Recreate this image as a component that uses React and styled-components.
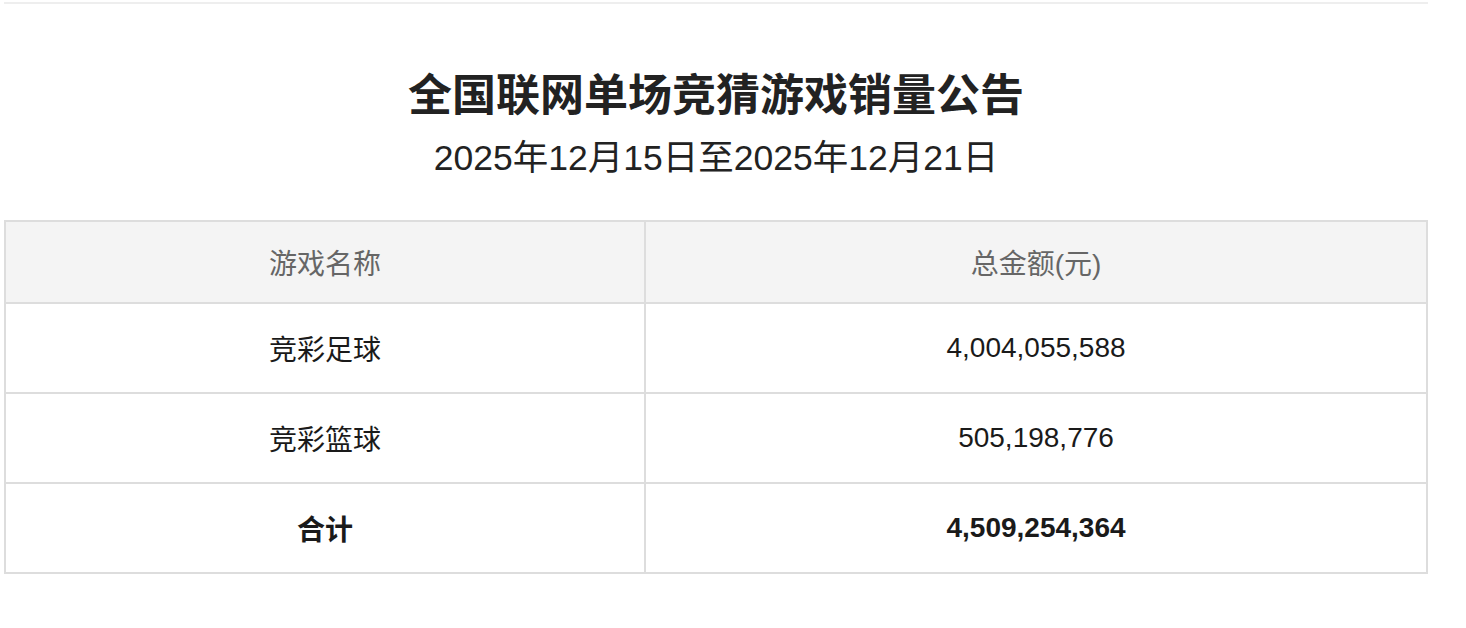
import React from "react";
import styled, { createGlobalStyle } from "styled-components";

const GlobalStyle = createGlobalStyle`
  html, body {
    margin: 0;
    padding: 0;
    background: #fff;
  }
  body {
    font-family: "Liberation Sans", "Noto Sans CJK SC", sans-serif;
    color: #1a1a1a;
  }
`;

const Page = styled.div`
  width: 1424px;
  margin-left: 4px;
  padding-top: 2px;
`;

const TopRule = styled.div`
  height: 2px;
  background: #eeeeee;
`;

const Heading = styled.div`
  display: flex;
  flex-direction: column;
  align-items: center;
  padding-top: 64px;
  padding-bottom: 34px;
`;

const Title = styled.h1`
  margin: 0;
  font-size: 44px;
  line-height: 56px;
  font-weight: 700;
  color: #222;
`;

const Subtitle = styled.p`
  margin: 6px 0 0;
  font-size: 35.5px;
  line-height: 56px;
  color: #222;
`;

const Table = styled.table`
  width: 100%;
  border-collapse: collapse;
  border: 2px solid #dddddd;
  table-layout: fixed;
`;

const HeadCell = styled.th`
  height: 80px;
  padding: 0;
  background: #f4f4f4;
  border: 2px solid #dddddd;
  font-size: 28px;
  font-weight: 400;
  color: #666;
  text-align: center;
  width: ${(p) => p.$width || "auto"};
`;

const Cell = styled.td`
  height: 88px;
  padding: 0;
  border: 2px solid #dddddd;
  font-size: 28px;
  font-weight: ${(p) => (p.$bold ? 700 : 400)};
  color: #1a1a1a;
  text-align: center;
`;

const rows = [
  { name: "竞彩足球", amount: "4,004,055,588" },
  { name: "竞彩篮球", amount: "505,198,776" },
  { name: "合计", amount: "4,509,254,364", total: true },
];

export default function App() {
  return (
    <>
      <GlobalStyle />
      <Page>
        <TopRule />
        <Heading>
          <Title>全国联网单场竞猜游戏销量公告</Title>
          <Subtitle>2025年12月15日至2025年12月21日</Subtitle>
        </Heading>
        <Table>
          <thead>
            <tr>
              <HeadCell $width="638px">游戏名称</HeadCell>
              <HeadCell>总金额(元)</HeadCell>
            </tr>
          </thead>
          <tbody>
            {rows.map((r) => (
              <tr key={r.name}>
                <Cell $bold={r.total}>{r.name}</Cell>
                <Cell $bold={r.total}>{r.amount}</Cell>
              </tr>
            ))}
          </tbody>
        </Table>
      </Page>
    </>
  );
}
